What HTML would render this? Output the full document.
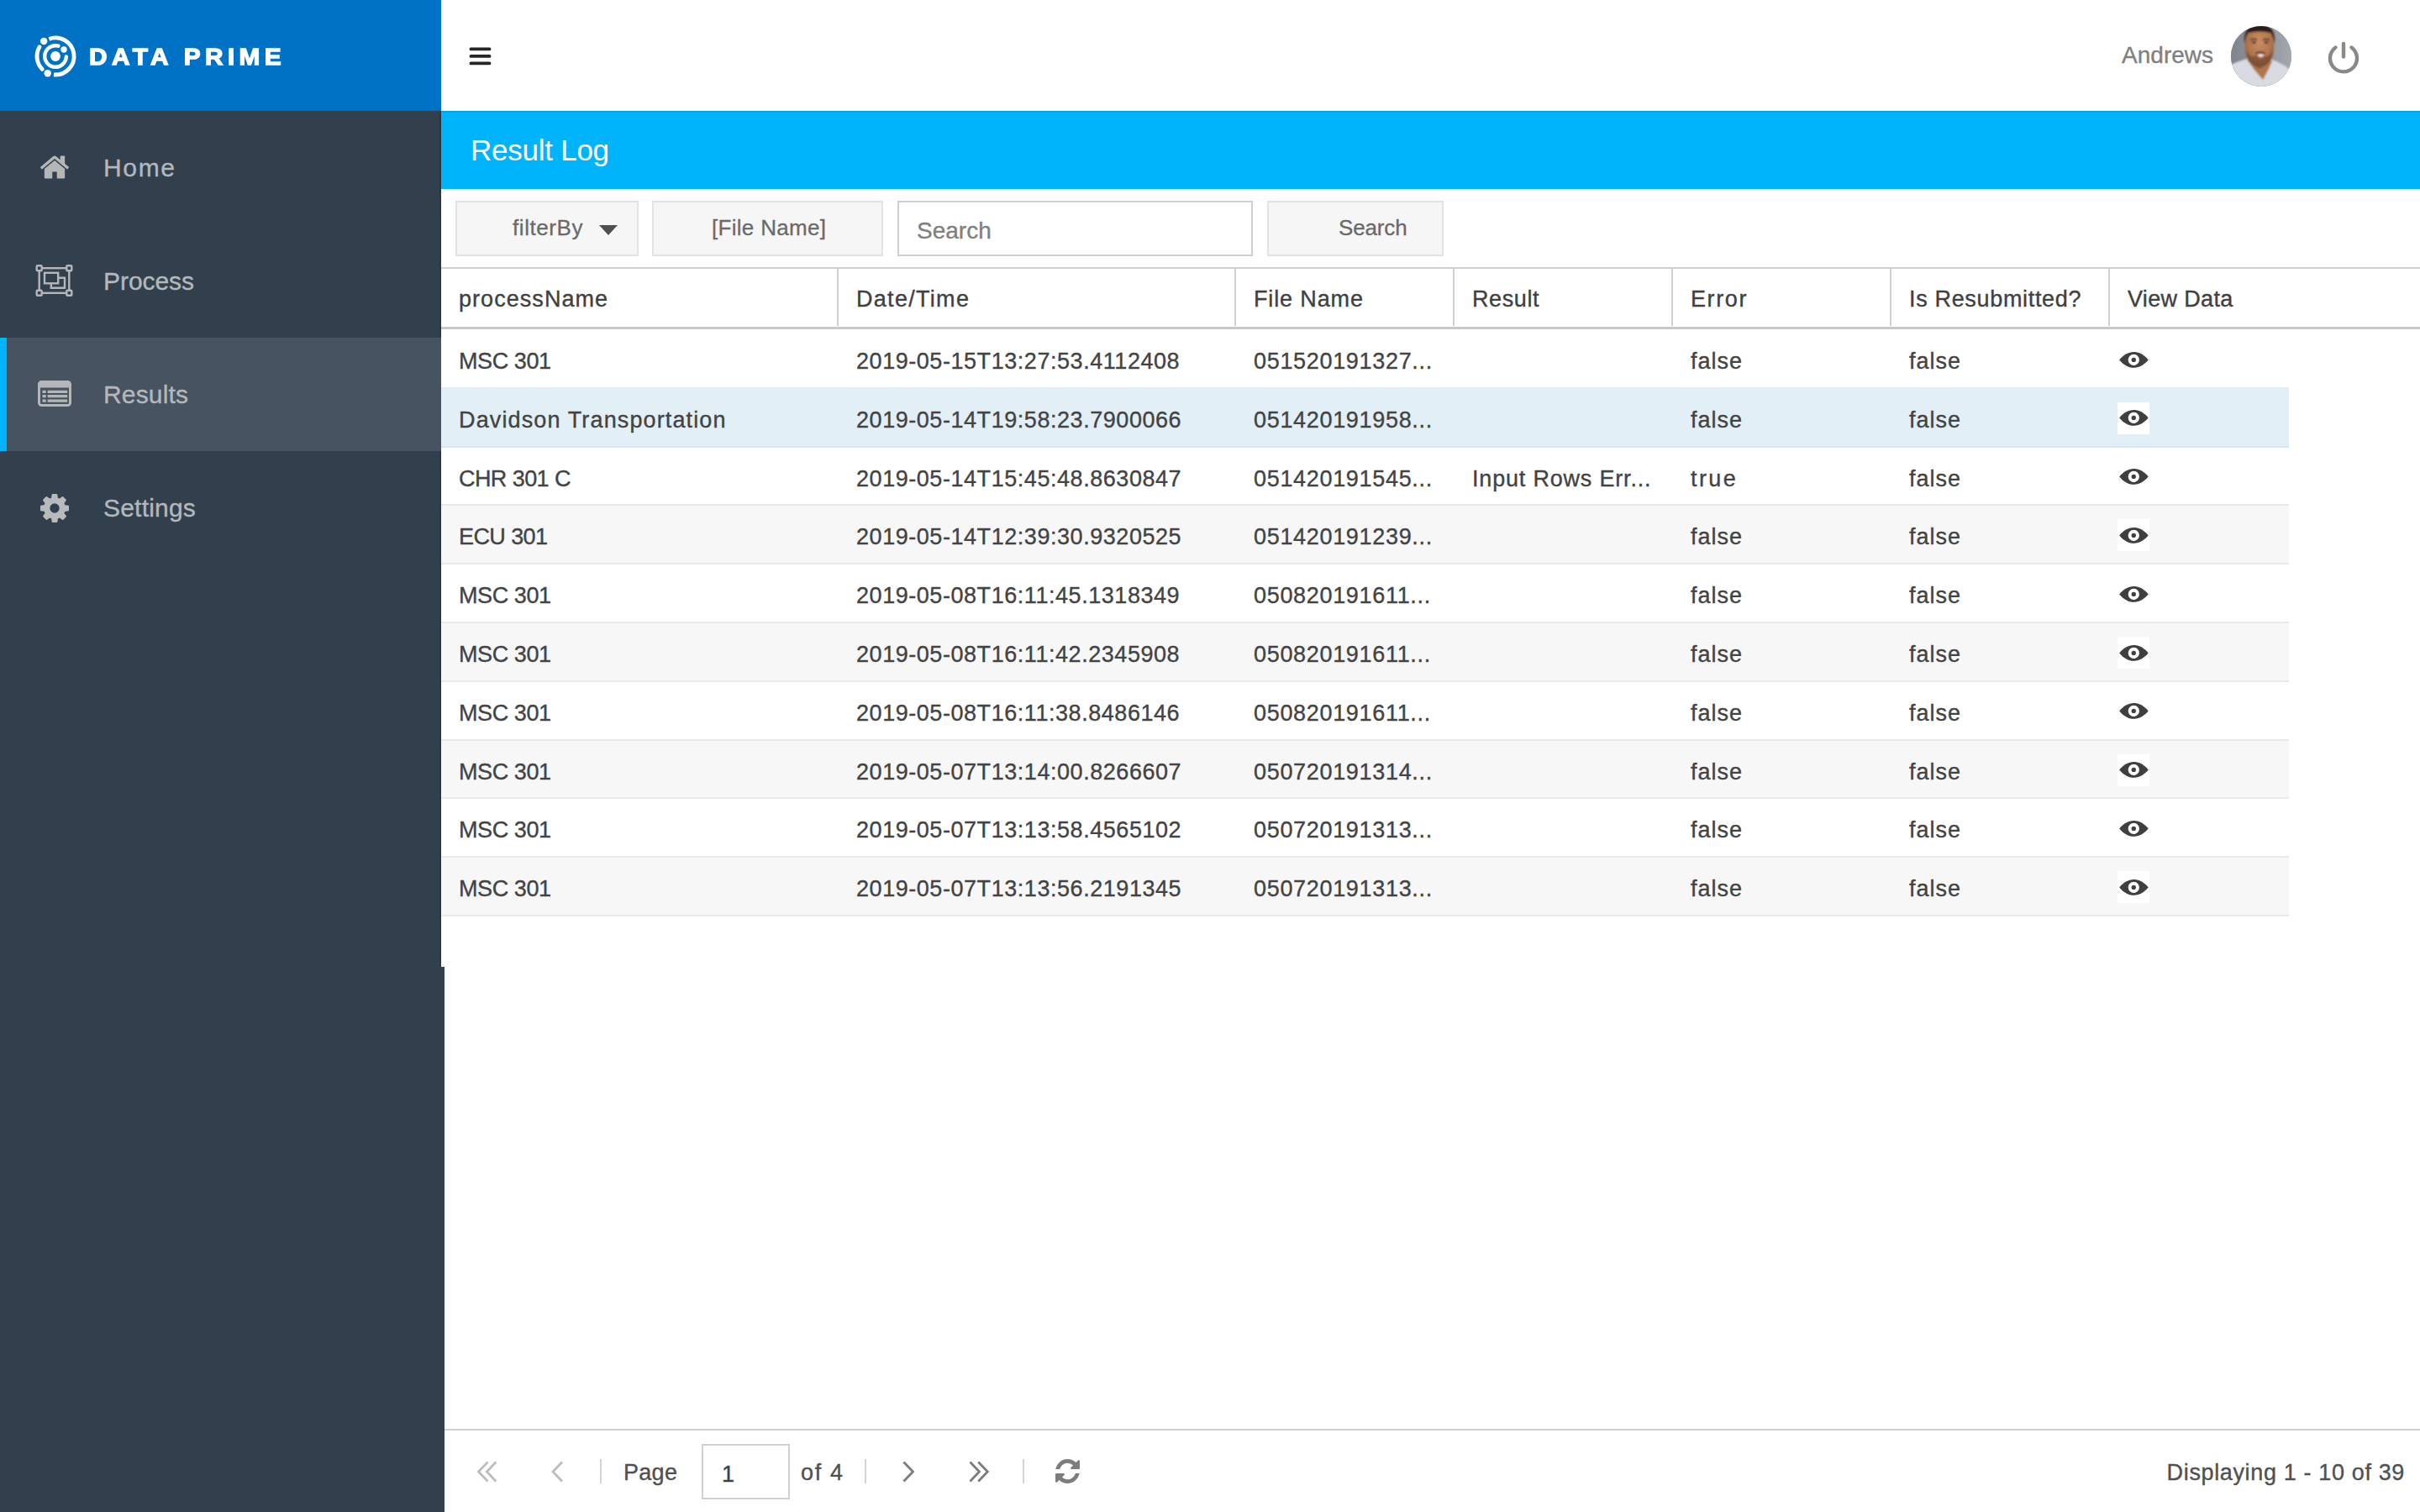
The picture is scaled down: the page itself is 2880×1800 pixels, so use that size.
<!DOCTYPE html>
<html lang="en">
<head>
<meta charset="utf-8">
<title>Data Prime - Result Log</title>
<style>
*{box-sizing:border-box;margin:0;padding:0}
html,body{width:2880px;height:1800px;overflow:hidden;background:#fff}
body{position:relative;font-family:"Liberation Sans",sans-serif;color:#404040;-webkit-text-stroke:.350px}
.abs{position:absolute}
/* sidebar */
#side{left:0;top:0;width:525px;height:1800px;background:#32404e}
#side2{left:0;top:1151px;width:529px;height:649px;background:#32404e}
#logo{left:0;top:0;width:525px;height:132px;background:#0072c6}
#logotxt{left:105.500px;top:48px;font-weight:bold;font-size:27.500px;line-height:40px;color:#fff;letter-spacing:5px;white-space:nowrap;-webkit-text-stroke:1.300px #fff;transform:scaleX(1.084);transform-origin:0 0}
.nav{left:0;width:525px;height:135px}
.nav.on{background:#475360;border-left:8px solid #00b4fb}
.nav span{position:absolute;left:123px;top:48px;font-size:30px;line-height:40px;color:#b4b8bc;white-space:nowrap}
.nav svg{position:absolute}
/* top bar */
#user{top:45.500px;right:246px;font-size:28px;line-height:40px;color:#808080;white-space:nowrap}
#avatar{left:2655px;top:31px;width:72px;height:72px;border-radius:50%;overflow:hidden;background:#8a8f96}
/* title */
#title{left:525px;top:132px;width:2355px;height:93px;background:#00b4fb;border-top:2px solid #00a3e6}
#title span{position:absolute;left:35px;top:23px;font-size:35px;line-height:44px;color:#fff;white-space:nowrap;letter-spacing:-.250px;-webkit-text-stroke:0}
/* toolbar */
.btn{top:239px;height:66px;background:#f6f6f6;border:2px solid #e2e2e2;font-size:26px;line-height:62px;color:#6a6a6a;-webkit-text-stroke:.300px;white-space:nowrap}
.btn span{position:absolute;top:-1px}
#search{left:1068px;top:239px;width:423px;height:66px;border:2px solid #cfcfcf;background:#fff;font-size:28px;line-height:68px;color:#808080;padding-left:21px}
/* grid */
#ghead{left:525px;top:318px;width:2355px;height:73.500px;border-top:2px solid #d0d0d0;border-bottom:3.500px solid #c9c9c9;background:#fff}
.hc{position:absolute;top:0;height:68px;border-right:2px solid #d0d0d0;font-size:27px;line-height:72px;padding-left:21px;color:#404040;white-space:nowrap}
.row{position:absolute;left:525px;width:2199px;height:69.800px;border-bottom:2px solid #e9e9e9;font-size:27px;line-height:75px;white-space:nowrap;color:#434343}
.row.alt{background:#f7f7f7}
.row.sel{background:#e2eff6;border-bottom-color:#d7e7f0}
.row b{position:absolute;top:0;font-weight:normal}
.c1{left:21px;letter-spacing:-.420px}.c2{left:494px;letter-spacing:.550px}.c3{left:967px;letter-spacing:.680px}.c4{left:1227px;letter-spacing:.810px}.c5{left:1487px;letter-spacing:1px}.c6{left:1747px;letter-spacing:1px}
.eye{position:absolute;left:1995px;top:16px;width:38px;height:38px;background:#fff}
.eye svg{position:absolute;left:1.500px;top:9.500px}
/* footer */
#foot{left:529px;top:1701px;width:2351px;height:99px;border-top:2px solid #d0d0d0;background:#fff;font-size:27px;color:#505050}
#foot .t{position:absolute;top:30px;line-height:40px;white-space:nowrap}
#foot .sep{position:absolute;top:33.500px;width:2px;height:29.500px;background:#d4d4d4}
#foot .fi{position:absolute}
#pg{position:absolute;left:306px;top:15.500px;width:105px;height:66px;border:2px solid #d0d0d0;background:#fff;line-height:68px;padding-left:22px;font-size:27px;color:#404040}
</style>
</head>
<body>
<svg width="0" height="0" style="position:absolute">
<defs>
<g id="i-eye2"><path fill="#3f3f3f" d="M.2 9.400C5 3.600 11 .100 17.400 .100S29.800 3.600 34.700 9.400C29.800 15.200 23.800 18.700 17.400 18.700S5 15.200 .2 9.400z"/><circle cx="17.300" cy="9.400" r="6.600" fill="#fff"/><circle cx="17.300" cy="9.400" r="2.700" fill="#3f3f3f"/></g>
<path id="i-home" d="M1472 992v480q0 26-19 45t-45 19h-384v-384h-256v384h-384q-26 0-45-19t-19-45v-480q0-1 .5-3t.5-3l575-474 575 474q1 2 1 6zm223-69l-62 74q-8 9-21 11h-3q-13 0-21-7l-692-577-692 577q-12 8-24 7-13-2-21-11l-62-74q-8-10-7-23.500t11-21.500l719-599q32-26 76-26t76 26l244 204v-195q0-14 9-23t23-9h192q14 0 23 9t9 23v408l219 182q10 8 11 21.500t-7 23.500z"/>
<path id="i-cog" d="M1152 896q0-106-75-181t-181-75-181 75-75 181 75 181 181 75 181-75 75-181zm512-109v222q0 12-8 23t-20 13l-185 28q-19 54-39 91 35 50 107 138 10 12 10 25t-9 23q-27 37-99 108t-94 71q-12 0-26-9l-138-108q-44 23-91 38-16 136-29 186-7 28-36 28h-222q-14 0-24.500-8.500t-11.500-21.500l-28-184q-49-16-90-37l-141 107q-10 9-25 9-14 0-25-11-126-114-165-168-7-10-7-23 0-12 8-23 15-21 51-66.500t54-70.500q-27-50-41-99l-183-27q-13-2-21-12.500t-8-23.500v-222q0-12 8-23t19-13l186-28q14-46 39-92-40-57-107-138-10-12-10-24 0-10 9-23 26-36 98.500-107.500t94.500-71.500q13 0 26 10l138 107q44-23 91-38 16-136 29-186 7-28 36-28h222q14 0 24.500 8.500t11.500 21.500l28 184q49 16 90 37l142-107q9-9 24-9 13 0 25 10 129 119 165 170 7 8 7 22 0 12-8 23-15 21-51 66.500t-54 70.500q26 50 41 98l183 28q13 2 21 12.500t8 23.500z"/>
<path id="i-refresh" d="M1639 1056q0 5-1 7-64 268-268 434.500t-478 166.500q-146 0-282.500-55t-243.500-157l-129 129q-19 19-45 19t-45-19-19-45v-448q0-26 19-45t45-19h448q26 0 45 19t19 45-19 45l-137 137q71 66 161 102t187 36q134 0 250-65t186-179q11-17 53-117 8-23 30-23h192q13 0 22.500 9.500t9.500 22.500zm25-800v448q0 26-19 45t-45 19h-448q-26 0-45-19t-19-45 19-45l138-138q-148-137-349-137-134 0-250 65t-186 179q-11 17-53 117-8 23-30 23h-199q-13 0-22.500-9.500t-9.500-22.500v-7q65-268 270-434.500t480-166.500q146 0 284 55.500t245 156.500l130-129q19-19 45-19t45 19 19 45z"/>
</defs>
</svg>
<div id="side" class="abs"></div>
<div id="side2" class="abs"></div>
<div class="abs" style="left:522.500px;top:132px;width:2px;height:1019px;background:#2b3643"></div>
<div id="logo" class="abs"></div>
<svg class="abs" style="left:38.400px;top:39.300px" width="56" height="56" viewBox="-28 -28 56 56" fill="none" stroke="#fff">
<circle r="5.900" fill="#fff" stroke="none"/>
<path d="M3.500 -12.300A12.800 12.800 0 1 0 12.800 0.500" stroke-width="4.400" stroke-linecap="round"/>
<circle cx="10" cy="-8" r="3.700" fill="#fff" stroke="none"/>
<path d="M-7.600 -20.600A22 22 0 1 1 -2 21.900" stroke-width="4.800"/>
<path d="M-15.700 15.400A22 22 0 0 1 -19 -11.100" stroke-width="4.800" stroke-linecap="round"/>
<circle cx="-13.800" cy="-18" r="4.200" fill="#fff" stroke="none"/>
<circle cx="-9.300" cy="20.200" r="4.200" fill="#fff" stroke="none"/>
</svg>
<div id="logotxt" class="abs">DATA PRIME</div>

<div class="abs nav" style="top:132px"><svg style="left:48px;top:53px" width="34" height="28" viewBox="90 253 1612 1283" fill="#b4b6b8"><use href="#i-home"/></svg><span style="letter-spacing:1.650px">Home</span></div>
<div class="abs nav" style="top:267px"><svg style="left:42px;top:48px" width="45" height="38" viewBox="0 0 45 38" fill="none" stroke="#b4b6b8" stroke-width="2.400"><rect x="4.700" y="4.200" width="35.600" height="29.600"/><rect x="1.700" y="1.200" width="6" height="6" rx="1" fill="#32404e"/><rect x="37.300" y="1.200" width="6" height="6" rx="1" fill="#32404e"/><rect x="1.700" y="30.800" width="6" height="6" rx="1" fill="#32404e"/><rect x="37.300" y="30.800" width="6" height="6" rx="1" fill="#32404e"/><path d="M18.800 22.400v5.400h16.200v-12h-7.800"/><rect x="11" y="9.800" width="16.200" height="12.500"/></svg><span style="letter-spacing:-.050px">Process</span></div>
<div class="abs nav on" style="top:402px"><svg style="left:36.500px;top:51px" width="40" height="31" viewBox="0 0 40 31" fill="none" stroke="#b4b6b8"><rect x="1.500" y="1.500" width="37" height="28" rx="3" stroke-width="3"/><path d="M2 5.200h36" stroke-width="6.500"/><path d="M5.500 13.300h4.200M11.600 13.300h23.600M5.500 18.700h4.200M11.600 18.700h23.600M5.500 24.100h4.200M11.600 24.100h23.600" stroke-width="3.200"/></svg><span style="left:115px;letter-spacing:.160px">Results</span></div>
<div class="abs nav" style="top:537px"><svg style="left:47.700px;top:50.800px" width="34" height="34" viewBox="128 128 1536 1536" fill="#b8babc"><use href="#i-cog"/></svg><span style="letter-spacing:.200px">Settings</span></div>

<svg class="abs" style="left:558px;top:56px" width="28" height="22" viewBox="0 0 28 22" fill="#262626"><rect x=".700" y=".450" width="25.600" height="3.700" rx="1.500"/><rect x=".700" y="9.050" width="25.600" height="3.700" rx="1.500"/><rect x=".700" y="17.550" width="25.600" height="3.700" rx="1.500"/></svg>
<svg class="abs" style="left:2767px;top:47px" width="44" height="44" viewBox="-22 -22 44 44" fill="none" stroke="#8c8886" stroke-width="4.400" stroke-linecap="round"><path d="M-9.500 -12.500A16 16 0 1 0 9.500 -12.500"/><path d="M0 -17V-1.500"/></svg>
<div id="user" class="abs">Andrews</div>
<div id="avatar" class="abs"><svg width="72" height="72" viewBox="0 0 72 72"><defs><linearGradient id="avbg" x1="0" y1="0" x2="1" y2="0"><stop offset="0" stop-color="#80858d"/><stop offset=".45" stop-color="#8d929a"/><stop offset="1" stop-color="#a3a8af"/></linearGradient><radialGradient id="avsk" cx=".5" cy=".42" r=".6"><stop offset="0" stop-color="#c98e63"/><stop offset=".7" stop-color="#b0744b"/><stop offset="1" stop-color="#8e5a3a"/></radialGradient><filter id="avbl" x="-10%" y="-10%" width="120%" height="120%"><feGaussianBlur stdDeviation=".8"/></filter></defs><rect width="72" height="72" fill="url(#avbg)"/><g filter="url(#avbl)"><path d="M-2 47q10-5 21-8l14 9 16-8q12 4 24 14v20H-2z" fill="#d8dce2"/><path d="M19 40q8 12 19 24 6-10 11-22-5-6-15-6t-15 4z" fill="#b27449"/><path d="M17 20q0-22 17-22t17 22v8q0 10-6 15t-11 5-11-5-6-15z" fill="url(#avsk)"/><path d="M16 22q-2-24 18-24t18 24q-2-12-5-14-13-3-26 0-3 2-5 14z" fill="#2c1f1a"/><path d="M19 30q1 13 8 17t7 4 7-4 8-17q-3 6-7 6-8-3-16 0-4 0-7-6z" fill="#5a3c2b" opacity=".5"/><path d="M29 32.500q6-2 12 0" stroke="#4a3022" stroke-width="1.800" fill="none"/><path d="M31 34q4.500-1.500 9 0-1 4-4.500 4T31 34z" fill="#d98a8a"/><path d="M32 34.300q3.500-1 7 0-1 1.700-3.500 1.700T32 34.300z" fill="#fff"/><path d="M23 16.500q4-2 8 0M38 16.500q4-2 8 0" stroke="#3a281f" stroke-width="1.600" fill="none"/><ellipse cx="27.500" cy="19.500" rx="2.600" ry="1.300" fill="#3a281f"/><ellipse cx="42" cy="19.500" rx="2.600" ry="1.300" fill="#3a281f"/></g></svg></div>

<div id="title" class="abs"><span>Result Log</span></div>

<div class="abs btn" style="left:542px;width:218px"><span style="left:66px;letter-spacing:.580px">filterBy</span><svg style="position:absolute;left:169px;top:27px" width="22" height="12" viewBox="0 0 22 12" fill="#505050"><path d="M0 0h22L11 12z"/></svg></div>
<div class="abs btn" style="left:776px;width:275px"><span style="left:69px;letter-spacing:.300px">[File Name]</span></div>
<div id="search" class="abs">Search</div>
<div class="abs btn" style="left:1508px;width:210px"><span style="left:83px;letter-spacing:-.140px">Search</span></div>

<div id="ghead" class="abs">
<div class="hc" style="left:0;width:473px;letter-spacing:1.05px">processName</div>
<div class="hc" style="left:473px;width:473px; letter-spacing:1.300px">Date/Time</div>
<div class="hc" style="left:946px;width:260px;letter-spacing:0.86px">File Name</div>
<div class="hc" style="left:1206px;width:260px;letter-spacing:0.59px">Result</div>
<div class="hc" style="left:1466px;width:260px;letter-spacing:1.60px">Error</div>
<div class="hc" style="left:1726px;width:260px;letter-spacing:0.67px">Is Resubmitted?</div>
<div class="hc" style="left:1986px;width:369px;border-right:0;letter-spacing:0.34px">View Data</div>
</div>

<div id="rows">
<div class="row" style="top:393.0px;border-bottom-color:#e2eff6"><b class="c1">MSC 301</b><b class="c2">2019-05-15T13:27:53.4112408</b><b class="c3">051520191327...</b><b class="c5">false</b><b class="c6">false</b><i class="eye"><svg width="35" height="19" viewBox="0 0 35 19"><use href="#i-eye2"/></svg></i></div>
<div class="row sel" style="top:462.8px"><b class="c1" style="letter-spacing:1.130px">Davidson Transportation</b><b class="c2">2019-05-14T19:58:23.7900066</b><b class="c3">051420191958...</b><b class="c5">false</b><b class="c6">false</b><i class="eye"><svg width="35" height="19" viewBox="0 0 35 19"><use href="#i-eye2"/></svg></i></div>
<div class="row" style="top:532.6px"><b class="c1" style="letter-spacing:-.570px">CHR 301 C</b><b class="c2">2019-05-14T15:45:48.8630847</b><b class="c3">051420191545...</b><b class="c4">Input Rows Err...</b><b class="c5" style="letter-spacing:2.400px">true</b><b class="c6">false</b><i class="eye"><svg width="35" height="19" viewBox="0 0 35 19"><use href="#i-eye2"/></svg></i></div>
<div class="row alt" style="top:602.4px"><b class="c1" style="letter-spacing:-.590px">ECU 301</b><b class="c2">2019-05-14T12:39:30.9320525</b><b class="c3">051420191239...</b><b class="c5">false</b><b class="c6">false</b><i class="eye"><svg width="35" height="19" viewBox="0 0 35 19"><use href="#i-eye2"/></svg></i></div>
<div class="row" style="top:672.2px"><b class="c1">MSC 301</b><b class="c2">2019-05-08T16:11:45.1318349</b><b class="c3">050820191611...</b><b class="c5">false</b><b class="c6">false</b><i class="eye"><svg width="35" height="19" viewBox="0 0 35 19"><use href="#i-eye2"/></svg></i></div>
<div class="row alt" style="top:742.0px"><b class="c1">MSC 301</b><b class="c2">2019-05-08T16:11:42.2345908</b><b class="c3">050820191611...</b><b class="c5">false</b><b class="c6">false</b><i class="eye"><svg width="35" height="19" viewBox="0 0 35 19"><use href="#i-eye2"/></svg></i></div>
<div class="row" style="top:811.8px"><b class="c1">MSC 301</b><b class="c2">2019-05-08T16:11:38.8486146</b><b class="c3">050820191611...</b><b class="c5">false</b><b class="c6">false</b><i class="eye"><svg width="35" height="19" viewBox="0 0 35 19"><use href="#i-eye2"/></svg></i></div>
<div class="row alt" style="top:881.6px"><b class="c1">MSC 301</b><b class="c2">2019-05-07T13:14:00.8266607</b><b class="c3">050720191314...</b><b class="c5">false</b><b class="c6">false</b><i class="eye"><svg width="35" height="19" viewBox="0 0 35 19"><use href="#i-eye2"/></svg></i></div>
<div class="row" style="top:951.4px"><b class="c1">MSC 301</b><b class="c2">2019-05-07T13:13:58.4565102</b><b class="c3">050720191313...</b><b class="c5">false</b><b class="c6">false</b><i class="eye"><svg width="35" height="19" viewBox="0 0 35 19"><use href="#i-eye2"/></svg></i></div>
<div class="row alt" style="top:1021.2px"><b class="c1">MSC 301</b><b class="c2">2019-05-07T13:13:56.2191345</b><b class="c3">050720191313...</b><b class="c5">false</b><b class="c6">false</b><i class="eye"><svg width="35" height="19" viewBox="0 0 35 19"><use href="#i-eye2"/></svg></i></div>
</div>

<div id="foot" class="abs">
<svg class="fi" style="left:37.500px;top:34px" width="27" height="30" viewBox="0 0 27 30" fill="none" stroke="#bdbdbd" stroke-width="2.800"><path d="M13.500 3.500L2.500 15l11 11.500M23.300 3.500L12.300 15l11 11.500"/></svg>
<svg class="fi" style="left:126px;top:34px" width="17" height="30" viewBox="0 0 17 30" fill="none" stroke="#bdbdbd" stroke-width="2.800"><path d="M14 3.500L3 15l11 11.500"/></svg>
<svg class="fi" style="left:543.500px;top:33.500px" width="17" height="30" viewBox="0 0 17 30" fill="none" stroke="#7c7c7c" stroke-width="2.800"><path d="M2.500 3.500L13.500 15l-11 11.500"/></svg>
<svg class="fi" style="left:622.500px;top:33.500px" width="27" height="30" viewBox="0 0 27 30" fill="none" stroke="#7c7c7c" stroke-width="2.800"><path d="M2.500 3.500L13.500 15l-11 11.500M12.300 3.500L23.300 15l-11 11.500"/></svg>
<svg class="fi" style="left:727px;top:34px" width="29" height="29" viewBox="128 128 1536 1536" fill="#7d7d7d"><use href="#i-refresh"/></svg>
<span class="t" style="left:213px;letter-spacing:.300px">Page</span>
<div id="pg">1</div>
<span class="t" style="left:424px;letter-spacing:1.700px">of 4</span>
<div class="sep" style="left:185px"></div>
<div class="sep" style="left:500px"></div>
<div class="sep" style="left:688px"></div>
<span class="t" style="right:18px;letter-spacing:.640px">Displaying 1 - 10 of 39</span>
</div>
</body>
</html>
